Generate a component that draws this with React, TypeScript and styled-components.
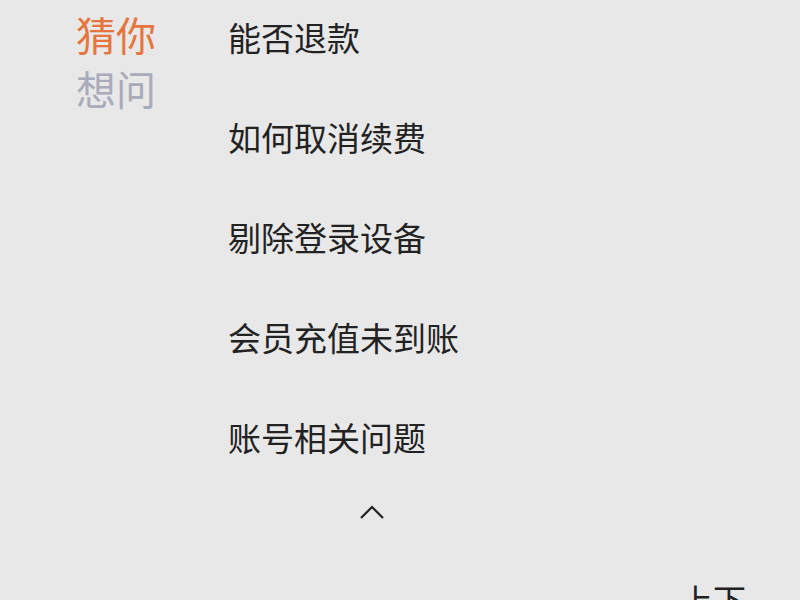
import React from 'react';
import styled, { createGlobalStyle } from 'styled-components';

const GlobalStyle = createGlobalStyle`
	html, body {
		margin: 0;
		padding: 0;
		background: #e8e8e8;
		overflow: hidden;
	}
	body {
		font-family: "Noto Sans CJK SC", "Noto Sans", sans-serif;
	}
`;

const Page = styled.div`
	width: 800px;
	height: 600px;
	display: flex;
	flex-direction: column;
	overflow: hidden;
`;

const Main = styled.div`
	display: flex;
	align-items: flex-start;
`;

const Title = styled.div`
	width: 228px;
	padding: 7px 0 0 76px;
	box-sizing: border-box;
	font-size: 40px;
	line-height: 54px;
`;

const TitleLine = styled.div<{ $tone: 'accent' | 'muted' }>`
	color: ${(p) => (p.$tone === 'accent' ? '#e5753c' : '#a9abba')};
`;

const Questions = styled.ul`
	list-style: none;
	margin: 0;
	padding: 13px 0 0;
	display: flex;
	flex-direction: column;
	gap: 52px;
`;

const Question = styled.li`
	font-size: 33px;
	line-height: 48px;
	color: #222;
`;

const Collapse = styled.button`
	margin: 44px 0 0 132px;
	padding: 0;
	width: 24px;
	height: 14px;
	border: none;
	background: none;
	display: flex;
	align-items: center;
	justify-content: center;
`;

const Footer = styled.div`
	display: flex;
	justify-content: flex-end;
	padding: 0 54px 0 0;
	margin-top: 60px;
	font-size: 33px;
	line-height: 40px;
	color: #222;
`;

const questions = ['能否退款', '如何取消续费', '剔除登录设备', '会员充值未到账', '账号相关问题'];

function App() {
	return (
		<Page>
			<GlobalStyle />
			<Main>
				<Title>
					<TitleLine $tone="accent">猜你</TitleLine>
					<TitleLine $tone="muted">想问</TitleLine>
				</Title>
				<div>
					<Questions>
						{questions.map((q) => (
							<Question key={q}>{q}</Question>
						))}
					</Questions>
					<Collapse aria-label="收起">
						<svg width="24" height="14" viewBox="0 0 24 14">
							<path d="M1 13 L12 2 L23 13" fill="none" stroke="#222" strokeWidth="2.2" />
						</svg>
					</Collapse>
				</div>
			</Main>
			<Footer>上下</Footer>
		</Page>
	);
}

export default App;
